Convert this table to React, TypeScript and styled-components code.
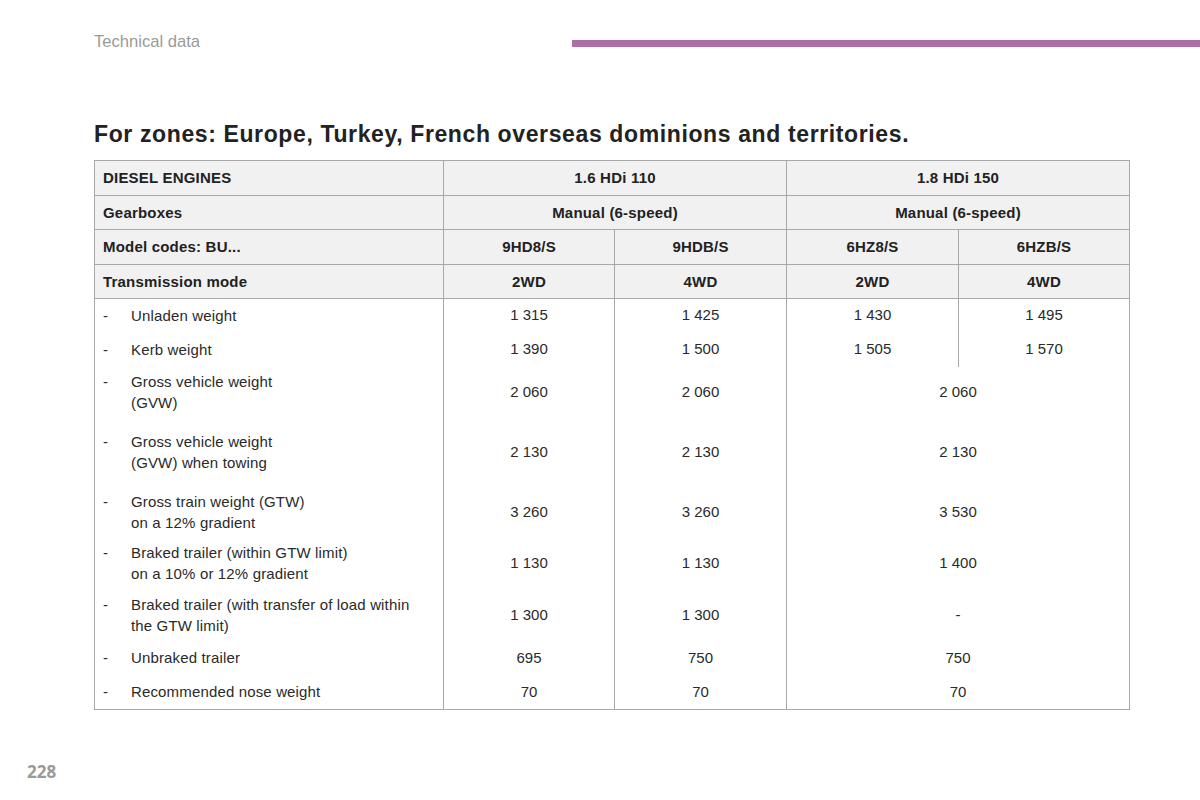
import React from "react";
import styled, { createGlobalStyle } from "styled-components";

const Global = createGlobalStyle`
  html, body { margin: 0; padding: 0; background: #ffffff; }
  body { font-family: "Liberation Sans", Arial, Helvetica, sans-serif; color: #222; }
`;

const Page = styled.div`
  width: 1200px;
  height: 800px;
  display: flex;
  flex-direction: column;
  box-sizing: border-box;
`;

const TopBar = styled.header`
  display: flex;
  align-items: flex-start;
  padding-top: 33px;
  height: 18px;
`;

const Section = styled.div`
  margin-left: 94px;
  font-size: 16.6px;
  line-height: 18px;
  color: #9a9a9a;
`;

const Accent = styled.div`
  margin-left: auto;
  margin-top: 7px;
  width: 628px;
  height: 7px;
  background: #ab6ea6;
`;

const Title = styled.h1`
  margin: 70px 0 0 94px;
  font-size: 23px;
  line-height: 26px;
  letter-spacing: 0.62px;
  font-weight: 700;
  color: #222;
`;

const Table = styled.table`
  margin: 13px 0 0 94px;
  width: 1035px;
  table-layout: fixed;
  border-collapse: collapse;
  border: 1px solid #a8a8a8;
  font-size: 15px;
`;

const HeadCell = styled.td<{ $first?: boolean }>`
  height: 34.5px;
  padding: 0 8px;
  background: #f1f1f1;
  border: 1px solid #a8a8a8;
  font-weight: 700;
  letter-spacing: 0.2px;
  color: #222;
  text-align: ${(p) => (p.$first ? "left" : "center")};
  vertical-align: middle;
  box-sizing: border-box;
`;

const BodyRow = styled.tr<{ $h: number }>`
  height: ${(p) => p.$h}px;
`;

const LabelCell = styled.td`
  padding: 0 0 0 8px;
  border-left: 1px solid #a8a8a8;
  vertical-align: middle;
  color: #2a2a2a;
  line-height: 21px;
  letter-spacing: 0.15px;
`;

const Label = styled.div`
  display: flex;
`;

const Dash = styled.span`
  width: 28px;
  flex: none;
`;

const ValueCell = styled.td`
  padding: 0 0 1px;
  border-left: 1px solid #a8a8a8;
  text-align: center;
  vertical-align: middle;
  color: #2a2a2a;
  font-size: 15px;
`;

const Footer = styled.footer`
  margin-top: auto;
  padding: 0 0 18px 27px;
  font-family: "Open Sans", "Liberation Sans", sans-serif;
  font-weight: 700;
  font-size: 17px;
  line-height: 20px;
  color: #9a9a9a;
`;

type Row = {
  label: React.ReactNode;
  h: number;
  v: string[];
};

const rows: Row[] = [
  { label: "Unladen weight", h: 33, v: ["1 315", "1 425", "1 430", "1 495"] },
  { label: "Kerb weight", h: 35, v: ["1 390", "1 500", "1 505", "1 570"] },
  { label: <>Gross vehicle weight<br />(GVW)</>, h: 50, v: ["2 060", "2 060", "2 060"] },
  { label: <>Gross vehicle weight<br />(GVW) when towing</>, h: 70, v: ["2 130", "2 130", "2 130"] },
  { label: <>Gross train weight (GTW)<br />on a 12% gradient</>, h: 50, v: ["3 260", "3 260", "3 530"] },
  { label: <>Braked trailer (within GTW limit)<br />on a 10% or 12% gradient</>, h: 52, v: ["1 130", "1 130", "1 400"] },
  { label: <>Braked trailer (with transfer of load within<br />the GTW limit)</>, h: 52, v: ["1 300", "1 300", "-"] },
  { label: "Unbraked trailer", h: 34, v: ["695", "750", "750"] },
  { label: "Recommended nose weight", h: 35, v: ["70", "70", "70"] },
];

export default function App() {
  return (
    <Page>
      <Global />
      <TopBar>
        <Section>Technical data</Section>
        <Accent />
      </TopBar>
      <Title>For zones: Europe, Turkey, French overseas dominions and territories.</Title>
      <Table>
        <colgroup>
          <col style={{ width: 349 }} />
          <col style={{ width: 171 }} />
          <col style={{ width: 172 }} />
          <col style={{ width: 172 }} />
          <col style={{ width: 171 }} />
        </colgroup>
        <thead>
          <tr>
            <HeadCell $first>DIESEL ENGINES</HeadCell>
            <HeadCell colSpan={2}>1.6 HDi 110</HeadCell>
            <HeadCell colSpan={2}>1.8 HDi 150</HeadCell>
          </tr>
          <tr>
            <HeadCell $first>Gearboxes</HeadCell>
            <HeadCell colSpan={2}>Manual (6-speed)</HeadCell>
            <HeadCell colSpan={2}>Manual (6-speed)</HeadCell>
          </tr>
          <tr>
            <HeadCell $first>Model codes: BU...</HeadCell>
            <HeadCell>9HD8/S</HeadCell>
            <HeadCell>9HDB/S</HeadCell>
            <HeadCell>6HZ8/S</HeadCell>
            <HeadCell>6HZB/S</HeadCell>
          </tr>
          <tr>
            <HeadCell $first>Transmission mode</HeadCell>
            <HeadCell>2WD</HeadCell>
            <HeadCell>4WD</HeadCell>
            <HeadCell>2WD</HeadCell>
            <HeadCell>4WD</HeadCell>
          </tr>
        </thead>
        <tbody>
          {rows.map((r, i) => (
            <BodyRow key={i} $h={r.h}>
              <LabelCell>
                <Label>
                  <Dash>-</Dash>
                  <span>{r.label}</span>
                </Label>
              </LabelCell>
              {r.v.map((val, j) => (
                <ValueCell key={j} colSpan={r.v.length === 3 && j === 2 ? 2 : 1}>
                  {val}
                </ValueCell>
              ))}
            </BodyRow>
          ))}
        </tbody>
      </Table>
      <Footer>228</Footer>
    </Page>
  );
}
